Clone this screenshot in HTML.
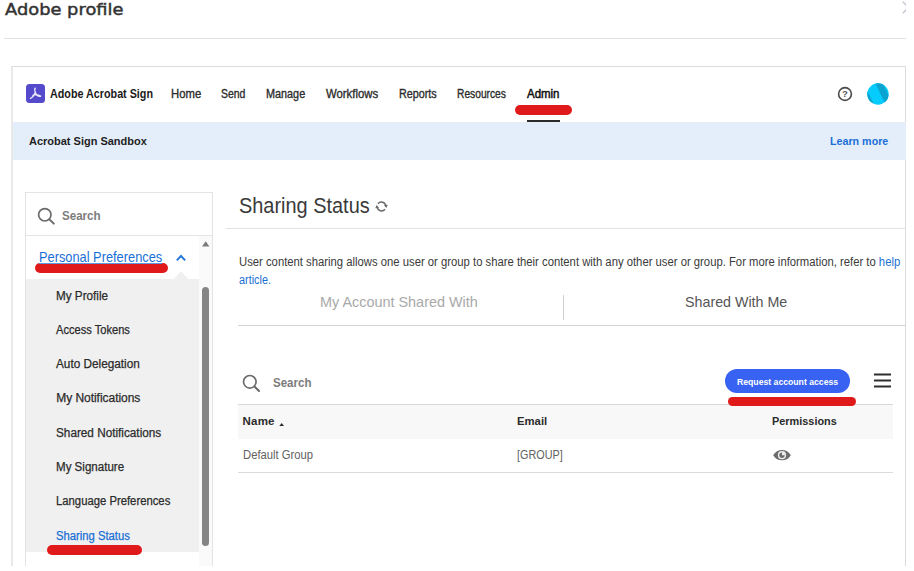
<!DOCTYPE html>
<html>
<head>
<meta charset="utf-8">
<title>Adobe profile</title>
<style>
*{box-sizing:border-box;margin:0;padding:0}
html,body{width:914px;height:571px;overflow:hidden;background:#fff}
body{font-family:"Liberation Sans",sans-serif;color:#2c2c2c;position:relative}
.a,.t{position:absolute;white-space:nowrap}
.t a,a{color:#1a6fd6;text-decoration:none}
.red{background:#e01a1a;border-radius:5px}
</style>
</head>
<body>
<!-- page chrome -->
<svg class="a" style="left:902px;top:0" width="4" height="16" viewBox="902 0 4 16"><path d="M902.800 1.800 L914 13 M902.800 13.200 L914 2" stroke="#c3c3d2" stroke-width="1.400" fill="none"/></svg>
<div class="a" style="left:4px;top:38px;width:902px;height:1px;background:#e3e3e3"></div>
<div class="a" style="left:11px;top:66px;width:895px;height:520px;border:1px solid #dcdcdc;border-left:2px solid #e9e9e9;background:#fff"></div>

<!-- top nav -->
<svg class="a" style="left:26px;top:84.300px" width="19" height="19" viewBox="0 0 19 19"><rect width="19" height="19" rx="3.500" fill="#5549cc"/><path d="M9.300 4.200 C8.600 4.200 8.500 6 9.300 8.200 C10.300 11 12.700 12.600 14.600 12.300 M9.300 8.200 C8.300 11 6.200 13.600 4.400 14.300 M6.800 11.300 C9 10.400 12 10.300 14.600 12" fill="none" stroke="#fff" stroke-opacity=".88" stroke-width="1.350" stroke-linecap="round"/></svg>
<div class="a red" style="left:515px;top:105px;width:56.500px;height:10px"></div>
<div class="a" style="left:527px;top:119.600px;width:32.500px;height:2.200px;background:#2a2a2a"></div>
<svg class="a" style="left:837.400px;top:86px" width="16" height="16" viewBox="0 0 16 16"><circle cx="8" cy="8" r="6.400" fill="none" stroke="#4a4a4a" stroke-width="1.600"/><text x="8" y="11.300" font-size="9.500" font-weight="bold" text-anchor="middle" font-family="Liberation Sans, sans-serif" fill="#555">?</text></svg>
<svg class="a" style="left:866.800px;top:83.100px" width="22" height="22" viewBox="0 0 22 22"><defs><clipPath id="av"><circle cx="11" cy="11" r="10.700"/></clipPath></defs><circle cx="11" cy="11" r="10.700" fill="#06ccfd"/><g clip-path="url(#av)"><path d="M8.260 0 L15.700 0 L26.260 22 L18.820 22 Z" fill="#0aa4d0"/><path d="M-3.300 0 L7.260 22 L-6 22 L-6 0 Z" fill="#0aa4d0"/></g></svg>

<div class="a" style="left:13px;top:121.500px;width:892.500px;height:38.500px;background:#e4eefa"></div>

<!-- sidebar -->
<div class="a" style="left:25px;top:192px;width:188px;height:400px;border:1px solid #e4e4e4;background:#fff"></div>
<svg class="a" style="left:37px;top:207px" width="19" height="18" viewBox="0 0 19 18"><circle cx="7.800" cy="7.800" r="6.200" fill="none" stroke="#6a6a6a" stroke-width="1.700"/><path d="M12.400 12.400 L16.800 16.600" stroke="#6a6a6a" stroke-width="2" stroke-linecap="round"/></svg>
<div class="a" style="left:26px;top:235px;width:186px;height:1px;background:#e4e4e4"></div>
<div class="a" style="left:199px;top:236px;width:13px;height:340px;background:#fafafa"></div>
<div class="a" style="left:26px;top:279px;width:173px;height:273px;background:#f0f0f0"></div>
<svg class="a" style="left:172.500px;top:270.500px" width="16" height="9" viewBox="0 0 16 9"><path d="M0 9 L8 0 L16 9 Z" fill="#f0f0f0"/></svg>
<svg class="a" style="left:175px;top:253px" width="12" height="9" viewBox="0 0 12 9"><path d="M1.800 7.400 L6 3 L10.200 7.400" fill="none" stroke="#2676de" stroke-width="1.900"/></svg>
<div class="a red" style="left:35.300px;top:263.200px;width:132.300px;height:9.600px"></div>
<svg class="a" style="left:202px;top:241px" width="8" height="6" viewBox="0 0 8 6"><path d="M0 5.500 L3.700 0.300 L7.400 5.500 Z" fill="#7a7a7a"/></svg>
<div class="a" style="left:202.300px;top:287px;width:7px;height:259px;border-radius:3.500px;background:#858585"></div>
<div class="a red" style="left:47.300px;top:545px;width:94.600px;height:10px"></div>

<!-- main -->
<svg class="a" style="left:375px;top:200.200px" width="13" height="13" viewBox="0 0 14 14"><path d="M3.220 4.040 A4.800 4.800 0 0 1 11.700 6.200 M10.780 9.960 A4.800 4.800 0 0 1 2.300 7.800" fill="none" stroke="#6a6a6a" stroke-width="1.600"/><path d="M9.600 5.600 L13.700 5.200 L12.300 8.500 Z M4.400 8.400 L0.300 8.800 L1.700 5.500 Z" fill="#6a6a6a"/></svg>
<div class="a" style="left:226px;top:227.500px;width:679px;height:1px;background:#e2e2e2"></div>
<div class="a" style="left:563px;top:295px;width:1px;height:25px;background:#cfcfcf"></div>
<div class="a" style="left:238px;top:325px;width:667.500px;height:1px;background:#d4d4d4"></div>

<svg class="a" style="left:241.500px;top:374px" width="19" height="19" viewBox="0 0 19 19"><circle cx="7.800" cy="7.800" r="6.300" fill="none" stroke="#6a6a6a" stroke-width="1.700"/><path d="M12.500 12.500 L17 17" stroke="#6a6a6a" stroke-width="2" stroke-linecap="round"/></svg>
<div class="a" style="left:724.600px;top:369px;width:125.500px;height:24.300px;border-radius:12.200px;background:#3862f2"></div>
<svg class="a" style="left:874px;top:373px" width="18" height="15" viewBox="0 0 18 15"><path d="M0 1.500 H17 M0 7.600 H17 M0 13.600 H17" stroke="#2e2e2e" stroke-width="2"/></svg>

<div class="a" style="left:238px;top:404.500px;width:654.500px;height:34.500px;background:#f8f8f8"></div>
<div class="a" style="left:238px;top:403.800px;width:654.500px;height:1px;background:#d8d8d8"></div>
<div class="a red" style="left:727.700px;top:396.600px;width:128px;height:9.200px"></div>
<svg class="a" style="left:278.800px;top:422.700px" width="5.400" height="3.400" viewBox="0 0 5.400 3.400"><path d="M0 3.400 L2.700 0 L5.400 3.400 Z" fill="#2c2c2c"/></svg>
<svg class="a" style="left:773.300px;top:448.800px" width="18" height="12.400" viewBox="0 0 18 12.400"><path d="M0.200 6.200 C4 -0.700 14 -0.700 17.800 6.200 C14 13.100 4 13.100 0.200 6.200 Z" fill="#6c6c6c"/><circle cx="9" cy="6.200" r="4.100" fill="#f1f1f1"/><circle cx="9" cy="6.200" r="2.700" fill="#6c6c6c"/><path d="M9 6.200 L9 3.300 A2.900 2.900 0 0 1 11.900 6.200 Z" fill="#f1f1f1"/></svg>
<div class="a" style="left:238px;top:472.200px;width:654.500px;height:1px;background:#dcdcdc"></div>

<div class="t" style="left:4.9px;top:-1.24px;font:normal 16.3px/21px 'DejaVu Sans',sans-serif;transform:scaleX(1.0961);transform-origin:0 50%;color:#333;-webkit-text-stroke:.45px #333">Adobe profile</div>
<div class="t" style="left:50.3px;top:85.54px;font:bold 12.3px/16px 'Liberation Sans',sans-serif;transform:scaleX(0.8749);transform-origin:0 50%;color:#1a1a1a;">Adobe Acrobat Sign</div>
<div class="t" style="left:171.1px;top:85.74px;font:normal 12.3px/16px 'Liberation Sans',sans-serif;transform:scaleX(0.9204);transform-origin:0 50%;color:#2c2c2c;-webkit-text-stroke:.35px #2c2c2c">Home</div>
<div class="t" style="left:221.2px;top:85.74px;font:normal 12.3px/16px 'Liberation Sans',sans-serif;transform:scaleX(0.8496);transform-origin:0 50%;color:#2c2c2c;-webkit-text-stroke:.35px #2c2c2c">Send</div>
<div class="t" style="left:266.3px;top:85.74px;font:normal 12.3px/16px 'Liberation Sans',sans-serif;transform:scaleX(0.8818);transform-origin:0 50%;color:#2c2c2c;-webkit-text-stroke:.35px #2c2c2c">Manage</div>
<div class="t" style="left:325.6px;top:85.74px;font:normal 12.3px/16px 'Liberation Sans',sans-serif;transform:scaleX(0.9224);transform-origin:0 50%;color:#2c2c2c;-webkit-text-stroke:.35px #2c2c2c">Workflows</div>
<div class="t" style="left:398.9px;top:85.74px;font:normal 12.3px/16px 'Liberation Sans',sans-serif;transform:scaleX(0.8755);transform-origin:0 50%;color:#2c2c2c;-webkit-text-stroke:.35px #2c2c2c">Reports</div>
<div class="t" style="left:456.7px;top:85.74px;font:normal 12.3px/16px 'Liberation Sans',sans-serif;transform:scaleX(0.8319);transform-origin:0 50%;color:#2c2c2c;-webkit-text-stroke:.35px #2c2c2c">Resources</div>
<div class="t" style="left:526.7px;top:85.74px;font:normal 12.3px/16px 'Liberation Sans',sans-serif;transform:scaleX(0.9323);transform-origin:0 50%;color:#111;-webkit-text-stroke:.5px #111">Admin</div>
<div class="t" style="left:29.2px;top:134.12px;font:bold 11.5px/15px 'Liberation Sans',sans-serif;transform:scaleX(0.9552);transform-origin:0 50%;color:#1e1e1e;">Acrobat Sign Sandbox</div>
<div class="t" style="left:830.0px;top:134.02px;font:bold 11.5px/15px 'Liberation Sans',sans-serif;transform:scaleX(0.9307);transform-origin:0 50%;color:#1a6fd6;">Learn more</div>
<div class="t" style="left:61.7px;top:208.04px;font:bold 12px/16px 'Liberation Sans',sans-serif;transform:scaleX(0.9642);transform-origin:0 50%;color:#7c7c7c;">Search</div>
<div class="t" style="left:38.9px;top:247.88px;font:normal 14.5px/19px 'Liberation Sans',sans-serif;transform:scaleX(0.8835);transform-origin:0 50%;color:#1a6fd6;text-decoration:underline;text-underline-offset:1px;text-decoration-thickness:1px;text-decoration-color:#5c98e2">Personal Preferences</div>
<div class="t" style="left:56.2px;top:287.84px;font:normal 12px/16px 'Liberation Sans',sans-serif;transform:scaleX(0.9748);transform-origin:0 50%;color:#2b2b2b;-webkit-text-stroke:.25px #2b2b2b">My Profile</div>
<div class="t" style="left:55.7px;top:322.14px;font:normal 12px/16px 'Liberation Sans',sans-serif;transform:scaleX(0.9257);transform-origin:0 50%;color:#2b2b2b;-webkit-text-stroke:.25px #2b2b2b">Access Tokens</div>
<div class="t" style="left:55.7px;top:356.44px;font:normal 12px/16px 'Liberation Sans',sans-serif;transform:scaleX(0.9812);transform-origin:0 50%;color:#2b2b2b;-webkit-text-stroke:.25px #2b2b2b">Auto Delegation</div>
<div class="t" style="left:56.2px;top:390.44px;font:normal 12px/16px 'Liberation Sans',sans-serif;letter-spacing:-0.034px;color:#2b2b2b;-webkit-text-stroke:.25px #2b2b2b">My Notifications</div>
<div class="t" style="left:55.7px;top:424.84px;font:normal 12px/16px 'Liberation Sans',sans-serif;transform:scaleX(0.9796);transform-origin:0 50%;color:#2b2b2b;-webkit-text-stroke:.25px #2b2b2b">Shared Notifications</div>
<div class="t" style="left:56.2px;top:459.04px;font:normal 12px/16px 'Liberation Sans',sans-serif;transform:scaleX(0.9632);transform-origin:0 50%;color:#2b2b2b;-webkit-text-stroke:.25px #2b2b2b">My Signature</div>
<div class="t" style="left:55.7px;top:493.24px;font:normal 12px/16px 'Liberation Sans',sans-serif;transform:scaleX(0.9412);transform-origin:0 50%;color:#2b2b2b;-webkit-text-stroke:.25px #2b2b2b">Language Preferences</div>
<div class="t" style="left:55.7px;top:527.64px;font:normal 12px/16px 'Liberation Sans',sans-serif;transform:scaleX(0.9388);transform-origin:0 50%;color:#1a6fd6;-webkit-text-stroke:.25px #1a6fd6">Sharing Status</div>
<div class="t" style="left:238.7px;top:192.45px;font:normal 21.5px/28px 'Liberation Sans',sans-serif;transform:scaleX(0.9267);transform-origin:0 50%;color:#3a3a3a;">Sharing Status</div>
<div class="t" style="left:238.7px;top:254.04px;font:normal 12px/16px 'Liberation Sans',sans-serif;transform:scaleX(0.9405);transform-origin:0 50%;color:#3a3a3a;">User content sharing allows one user or group to share their content with any other user or group. For more information, refer to <a>help</a></div>
<div class="t" style="left:238.7px;top:271.54px;font:normal 12px/16px 'Liberation Sans',sans-serif;transform:scaleX(0.9054);transform-origin:0 50%;color:#1a6fd6;">article.</div>
<div class="t" style="left:320.0px;top:292.30px;font:normal 15px/20px 'Liberation Sans',sans-serif;transform:scaleX(0.9607);transform-origin:0 50%;color:#a9a9a9;">My Account Shared With</div>
<div class="t" style="left:684.7px;top:292.30px;font:normal 15px/20px 'Liberation Sans',sans-serif;transform:scaleX(0.9512);transform-origin:0 50%;color:#555;">Shared With Me</div>
<div class="t" style="left:272.8px;top:375.04px;font:bold 12px/16px 'Liberation Sans',sans-serif;transform:scaleX(0.9617);transform-origin:0 50%;color:#7c7c7c;">Search</div>
<div class="t" style="left:736.8px;top:375.51px;font:bold 9.5px/12px 'Liberation Sans',sans-serif;transform:scaleX(0.9117);transform-origin:0 50%;color:#fff;">Request account access</div>
<div class="t" style="left:242.5px;top:414.22px;font:bold 11.5px/15px 'Liberation Sans',sans-serif;letter-spacing:0.224px;color:#2c2c2c;">Name</div>
<div class="t" style="left:517.0px;top:414.22px;font:bold 11.5px/15px 'Liberation Sans',sans-serif;transform:scaleX(0.9841);transform-origin:0 50%;color:#2c2c2c;">Email</div>
<div class="t" style="left:772.2px;top:414.22px;font:bold 11.5px/15px 'Liberation Sans',sans-serif;transform:scaleX(0.9473);transform-origin:0 50%;color:#2c2c2c;">Permissions</div>
<div class="t" style="left:242.5px;top:447.24px;font:normal 12px/16px 'Liberation Sans',sans-serif;transform:scaleX(0.9382);transform-origin:0 50%;color:#626262;">Default Group</div>
<div class="t" style="left:517.0px;top:447.24px;font:normal 12px/16px 'Liberation Sans',sans-serif;transform:scaleX(0.9019);transform-origin:0 50%;color:#626262;">[GROUP]</div>

<!-- bottom / right white crop -->
<div class="a" style="left:0;top:565.500px;width:914px;height:6px;background:#fff"></div>
<div class="a" style="left:906px;top:0;width:8px;height:571px;background:#fff"></div>
</body>
</html>
